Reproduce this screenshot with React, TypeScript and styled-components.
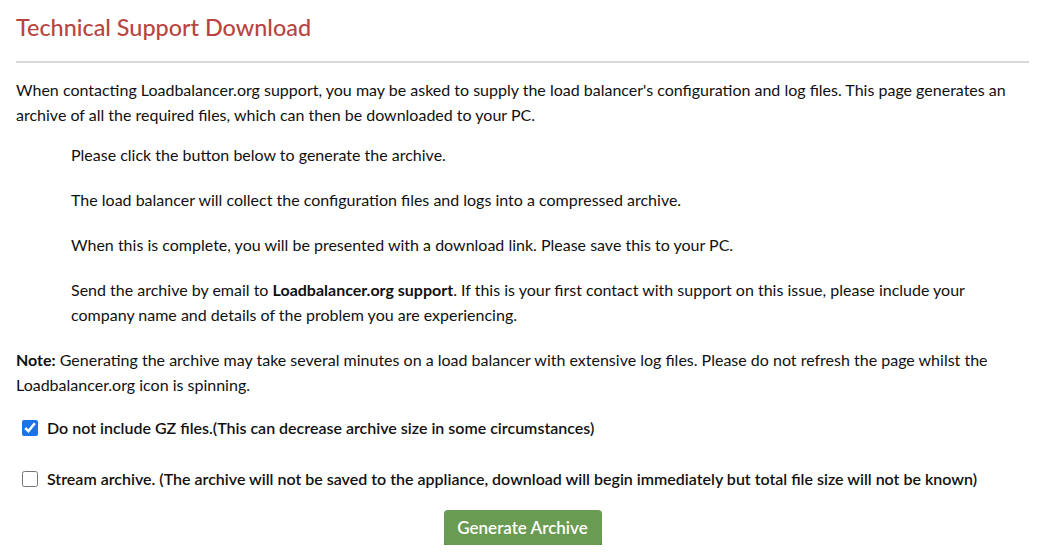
import React from "react";
import styled, { createGlobalStyle } from "styled-components";

const Global = createGlobalStyle`
  html, body { margin: 0; padding: 0; background: #fff; }
  body { font-family: "Lato", "Open Sans", sans-serif; color: #111; }
`;

const Page = styled.div`
  width: 1013px;
  padding: 0 0 0 16px;
  font-size: 16px;
  line-height: 25px;
`;

const Title = styled.h1`
  margin: 0;
  padding-top: 12px;
  height: 49px;
  font-size: 23.4px;
  line-height: 30px;
  font-weight: 500;
  color: #b8453f;
`;

const Rule = styled.hr`
  margin: 0;
  border: 0;
  border-top: 2px solid #d9d9d9;
`;

const Para = styled.p`
  margin: 0;
`;

const Intro = styled(Para)`
  margin-top: 14px;
`;

const Steps = styled.div`
  display: flex;
  flex-direction: column;
  gap: 20px;
  margin-top: 15px;
  padding-left: 55px;
`;

const Note = styled(Para)`
  margin-top: 20px;
`;

const CheckRow = styled.label<{ $top: number }>`
  display: flex;
  align-items: center;
  gap: 9px;
  margin-top: ${(p) => p.$top}px;
  padding-left: 6px;
  font-size: 16px;
  line-height: 25px;
  font-weight: 600;
`;

const Box = styled.input`
  margin: 0;
  width: 16px;
  height: 16px;
  accent-color: #1a73e8;
`;

const ButtonRow = styled.div`
  display: flex;
  justify-content: center;
  margin-top: 19px;
`;

const Button = styled.button`
  width: 158px;
  height: 35px;
  border: 0;
  border-radius: 4px;
  background: #6a9b52;
  box-shadow: 0 2px 0 #4b7a37;
  color: #fff;
  font-family: inherit;
  font-size: 17px;
  font-weight: 600;
`;

export default function App() {
  return (
    <>
      <Global />
      <Page>
        <Title>Technical Support Download</Title>
        <Rule />
        <Intro>
          When contacting Loadbalancer.org support, you may be asked to supply the load balancer's configuration and
          log files. This page generates an archive of all the required files, which can then be downloaded to your PC.
        </Intro>
        <Steps>
          <Para>Please click the button below to generate the archive.</Para>
          <Para>The load balancer will collect the configuration files and logs into a compressed archive.</Para>
          <Para>When this is complete, you will be presented with a download link. Please save this to your PC.</Para>
          <Para>
            Send the archive by email to <b>Loadbalancer.org support</b>. If this is your first contact with support on
            this issue, please include your company name and details of the problem you are experiencing.
          </Para>
        </Steps>
        <Note>
          <b>Note:</b> Generating the archive may take several minutes on a load balancer with extensive log files.
          Please do not refresh the page whilst the Loadbalancer.org icon is spinning.
        </Note>
        <CheckRow $top={18}>
          <Box type="checkbox" defaultChecked />
          Do not include GZ files.(This can decrease archive size in some circumstances)
        </CheckRow>
        <CheckRow $top={26}>
          <Box type="checkbox" />
          Stream archive. (The archive will not be saved to the appliance, download will begin immediately but total
          file size will not be known)
        </CheckRow>
        <ButtonRow>
          <Button>Generate Archive</Button>
        </ButtonRow>
      </Page>
    </>
  );
}
